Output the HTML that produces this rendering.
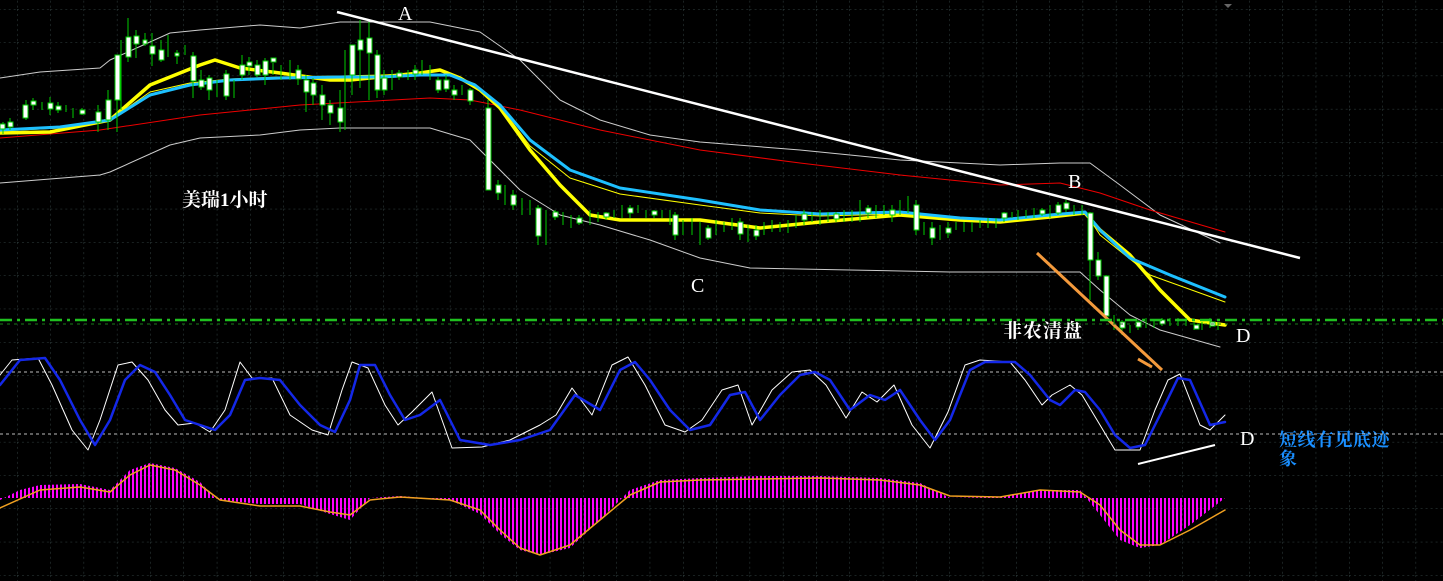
<!DOCTYPE html>
<html><head><meta charset="utf-8"><style>
html,body{margin:0;padding:0;background:#000;width:1443px;height:581px;overflow:hidden}
svg{display:block}
text{font-family:"Liberation Serif","Noto Serif CJK SC",serif}
.cn{font-family:"Liberation Serif","Noto Serif CJK SC",serif;font-weight:bold}
polyline{stroke-linejoin:round;stroke-linecap:round}
</style></head><body>
<svg width="1443" height="581" viewBox="0 0 1443 581" xmlns="http://www.w3.org/2000/svg">
<defs>
<pattern id="grid" width="33.3" height="33.3" patternUnits="userSpaceOnUse" x="17" y="9">
<line x1="0" y1="0" x2="0" y2="33.3" stroke="#354545" stroke-dasharray="2,3"/>
<line x1="0" y1="0" x2="33.3" y2="0" stroke="#354545" stroke-dasharray="2,3"/>
</pattern>
<pattern id="bars" width="4" height="10" patternUnits="userSpaceOnUse">
<rect x="0" y="0" width="2" height="10" fill="#ff00ff"/>
</pattern>
</defs>
<rect width="1443" height="581" fill="#000"/>
<rect width="1443" height="581" fill="url(#grid)"/>
<polygon points="1224,4 1232,4 1228,8" fill="#666"/>

<polyline fill="none" stroke="#ccc" stroke-width="1" points="0,78 40,72 100,68 110,60 170,33 200,30 260,25 300,28 340,22 400,22 430,22 480,32 520,60 560,100 600,120 650,135 700,142 800,150 900,160 1000,165 1060,163 1090,163 1120,185 1160,215 1220,243"/>
<polyline fill="none" stroke="#ccc" stroke-width="1" points="0,183 100,175 110,172 170,145 200,138 260,135 300,130 340,128 380,128 430,128 470,140 520,190 560,215 600,225 650,240 700,258 750,268 850,270 950,272 1000,272 1080,272 1100,290 1130,315 1160,330 1220,347"/>
<polyline fill="none" stroke="#e00" stroke-width="1" points="0,138 100,130 200,115 300,105 430,98 470,100 520,110 600,130 700,150 800,163 900,175 1000,185 1060,183 1100,193 1150,210 1225,232"/>
<polyline fill="none" stroke="#ff0" stroke-width="1" points="0,131 60,128 110,120 150,92 190,83 230,79 280,77 340,76 420,74 450,74 475,84 500,106 530,146 570,178 620,194 700,205 760,213 820,216 900,214 960,219 1000,221 1050,216 1085,212 1100,235 1150,275 1225,302"/>
<polyline fill="none" stroke="#ff0" stroke-width="3.5" points="0,133 50,132 110,120 150,85 200,65 215,60 240,68 280,73 330,80 350,80 380,77 420,73 440,70 460,78 480,90 500,108 530,150 560,185 590,215 620,220 700,220 760,228 820,222 900,215 960,220 1000,222 1050,217 1085,213 1100,230 1130,255 1160,290 1190,320 1225,325"/>
<polyline fill="none" stroke="#1ec0ff" stroke-width="3" points="0,130 60,127 110,120 150,95 190,85 230,80 280,78 340,77 380,77 420,75 450,75 475,85 500,105 530,140 570,170 620,188 700,200 760,210 820,214 900,212 960,218 1000,220 1050,215 1085,212 1100,230 1130,258 1170,275 1225,297"/>

<g stroke="#0c0" stroke-width="1" fill="#fff">
<path d="M3,122V134M10,118V130M26,100V120M33,98V110M42,102V110M50,97V115M58,102V113M66,105V112M73,108V118M82,108V115M98,105V132M108,90V130M117,75V132M121,40V110M128,18V62M136,30V58M145,33V46M152,33V66M161,40V62M168,35V57M177,50V64M185,45V55M193,52V98M201,70V90M209,75V100M217,80V97M226,70V100M234,80V98M242,55V80M249,57V75M257,60V77M265,58V85M273,63V75M281,65V80M290,60V80M298,65V85M306,75V112M313,78V105M322,85V120M330,100V125M340,90V132M345,50V130M352,45V95M360,20V88M369,22V100M377,50V98M384,70V95M392,70V90M399,70V80M408,70V80M415,65V80M422,60V75M430,65V80M438,77V93M446,75V92M454,85V100M462,85V95M470,88V105M488,100V190M498,180V200M505,185V205M513,190V210M522,198V215M530,200V215M538,205V245M546,210V245M555,210V220M563,212V225M571,215V228M579,215V225M590,210V225M598,212V222M606,212V220M614,210V218M622,205V218M630,205V218M638,205V213M646,210V218M654,210V218M662,210V218M670,210V225M675,212V240M683,220V235M692,218V235M700,222V245M708,225V240M716,220V235M724,222V232M732,218V230M740,218V240M748,225V242M756,225V240M764,222V235M772,220V232M780,222V232M788,220V233M796,215V228M804,210V225M812,212V222M820,210V225M828,212V222M836,212V222M844,210V222M852,210V222M860,200V222M868,205V218M876,205V218M884,205V215M892,205V222M900,200V215M908,196V213M916,200V235M924,222V235M932,222V245M940,225V240M948,222V238M956,222V230M964,222V232M972,222V232M980,220V228M988,218V228M996,218V228M1004,212V222M1012,212V218M1018,210V220M1026,210V218M1034,208V218M1042,208V216M1050,205V218M1058,202V215M1066,200V212M1074,205V215M1082,205V215M1090,212V300M1098,252V280M1106,275V320M1114,315V330M1122,320V335M1130,325V333M1138,320V330M1146,318V328M1154,320V328M1162,318V326M1170,318V326M1178,318V326M1186,318V326M1194,322V330M1202,322V330M1210,318V328M1218,322V330"/>
<rect x="0" y="124" width="5" height="5"/><rect x="8" y="122" width="5" height="5"/><rect x="23" y="105" width="5" height="13"/><rect x="31" y="101" width="5" height="4"/><rect x="48" y="103" width="5" height="6"/><rect x="56" y="106" width="5" height="4"/><rect x="80" y="110" width="5" height="4"/><rect x="96" y="112" width="5" height="10"/><rect x="106" y="100" width="5" height="20"/><rect x="115" y="55" width="5" height="45"/><rect x="126" y="37" width="5" height="20"/><rect x="134" y="36" width="5" height="8"/><rect x="143" y="40" width="4" height="4"/><rect x="150" y="46" width="5" height="8"/><rect x="159" y="50" width="5" height="10"/><rect x="175" y="53" width="4" height="3"/><rect x="191" y="56" width="5" height="25"/><rect x="199" y="80" width="5" height="7"/><rect x="207" y="78" width="5" height="12"/><rect x="224" y="74" width="5" height="22"/><rect x="240" y="65" width="5" height="10"/><rect x="247" y="62" width="5" height="4"/><rect x="255" y="65" width="5" height="10"/><rect x="263" y="61" width="5" height="14"/><rect x="271" y="58" width="5" height="4"/><rect x="296" y="70" width="5" height="9"/><rect x="304" y="80" width="5" height="12"/><rect x="311" y="83" width="5" height="12"/><rect x="320" y="95" width="5" height="10"/><rect x="328" y="105" width="5" height="8"/><rect x="338" y="108" width="5" height="14"/><rect x="350" y="45" width="5" height="30"/><rect x="358" y="40" width="5" height="10"/><rect x="367" y="38" width="5" height="15"/><rect x="375" y="55" width="5" height="35"/><rect x="382" y="78" width="5" height="12"/><rect x="397" y="73" width="5" height="4"/><rect x="413" y="70" width="5" height="4"/><rect x="436" y="80" width="5" height="10"/><rect x="444" y="80" width="5" height="9"/><rect x="452" y="90" width="5" height="5"/><rect x="468" y="90" width="5" height="11"/><rect x="486" y="108" width="5" height="82"/><rect x="496" y="185" width="5" height="8"/><rect x="511" y="195" width="5" height="10"/><rect x="536" y="208" width="5" height="28"/><rect x="553" y="212" width="5" height="5"/><rect x="577" y="218" width="5" height="5"/><rect x="604" y="213" width="5" height="4"/><rect x="628" y="208" width="5" height="5"/><rect x="652" y="211" width="5" height="4"/><rect x="673" y="215" width="5" height="20"/><rect x="706" y="228" width="5" height="10"/><rect x="738" y="222" width="5" height="12"/><rect x="754" y="230" width="5" height="6"/><rect x="802" y="214" width="5" height="6"/><rect x="834" y="214" width="5" height="5"/><rect x="866" y="208" width="5" height="5"/><rect x="890" y="210" width="5" height="5"/><rect x="914" y="205" width="5" height="25"/><rect x="930" y="228" width="5" height="10"/><rect x="946" y="228" width="5" height="5"/><rect x="1002" y="213" width="5" height="5"/><rect x="1040" y="210" width="5" height="4"/><rect x="1056" y="205" width="5" height="8"/><rect x="1064" y="203" width="5" height="6"/><rect x="1088" y="213" width="5" height="47"/><rect x="1096" y="260" width="5" height="16"/><rect x="1104" y="276" width="5" height="40"/><rect x="1120" y="322" width="5" height="6"/><rect x="1136" y="322" width="5" height="5"/><rect x="1160" y="320" width="5" height="4"/><rect x="1194" y="325" width="5" height="4"/><rect x="1210" y="322" width="5" height="4"/>
</g>

<line x1="337" y1="12" x2="1300" y2="258" stroke="#fff" stroke-width="2.5"/>
<line x1="1037" y1="253" x2="1162" y2="370" stroke="#f49a3c" stroke-width="3"/>
<line x1="1138" y1="359" x2="1152" y2="367" stroke="#f49a3c" stroke-width="3"/>
<line x1="0" y1="320" x2="1443" y2="320" stroke="#1fc01f" stroke-width="2.5" stroke-dasharray="12,5,3,5"/>
<line x1="0" y1="324" x2="1443" y2="324" stroke="#1a7a1a" stroke-width="1" stroke-dasharray="3,4"/>

<text x="398" y="20" fill="#fff" font-size="20">A</text>
<text x="1068" y="188" fill="#fff" font-size="20">B</text>
<text x="691" y="292" fill="#fff" font-size="20">C</text>
<text x="1236" y="342" fill="#fff" font-size="20">D</text>
<text x="1240" y="445" fill="#fff" font-size="20">D</text>
<text x="182" y="206" fill="#fff" font-size="19" class="cn">美瑞1小时</text>
<text x="1003" y="337" fill="#fff" font-size="19" class="cn" letter-spacing="1">非农清盘</text>
<text x="1279" y="446" fill="#1a8fff" font-size="18" class="cn" letter-spacing="0.5">短线有见底迹</text>
<text x="1279" y="465" fill="#1a8fff" font-size="18" class="cn">象</text>

<line x1="0" y1="372" x2="1443" y2="372" stroke="#bbb" stroke-dasharray="3,3"/>
<line x1="0" y1="434" x2="1443" y2="434" stroke="#bbb" stroke-dasharray="3,3"/>
<polyline fill="none" stroke="#fff" stroke-width="1" points="0,375 12,360 38,358 52,385 72,430 88,450 100,420 118,365 132,362 148,380 165,410 178,425 195,423 210,432 225,410 240,362 252,378 272,378 290,415 312,430 328,435 342,390 352,362 368,368 385,405 398,425 412,412 432,392 452,448 482,447 510,440 540,425 556,415 572,388 592,415 612,365 628,357 645,385 665,425 685,432 702,420 722,390 738,385 752,425 772,390 792,372 810,370 826,385 846,418 862,392 877,402 894,385 912,425 930,448 948,412 965,365 980,360 1010,362 1025,380 1042,405 1052,395 1070,385 1082,395 1100,425 1115,450 1140,450 1155,410 1168,380 1180,374 1200,425 1210,430 1225,415"/>
<polyline fill="none" stroke="#1428e8" stroke-width="2.5" points="0,385 20,360 45,358 60,380 80,420 95,445 110,420 125,380 140,365 155,372 170,395 185,420 200,425 215,430 230,415 245,380 260,378 280,380 300,405 320,425 335,432 350,400 360,365 375,365 390,395 405,420 420,415 440,400 460,440 490,445 520,440 550,430 575,395 600,410 620,370 635,362 650,380 670,410 690,430 710,425 730,395 745,392 760,420 780,395 800,375 815,372 830,380 850,410 870,395 885,400 900,390 920,420 935,440 950,420 970,370 985,362 1015,362 1030,375 1050,400 1060,405 1075,390 1085,392 1100,410 1115,435 1130,448 1145,445 1160,415 1178,378 1190,380 1210,425 1225,422"/>
<line x1="1138" y1="464" x2="1215" y2="445" stroke="#fff" stroke-width="2"/>

<polygon fill="url(#bars)" points="0,498 0,500 20,490 40,485 80,484 110,490 130,470 150,463 175,468 200,482 215,498 220,500 260,504 300,504 330,514 350,520 370,498 400,496 450,500 480,514 500,534 520,550 540,555 570,548 600,520 630,490 660,480 700,478 760,476 820,476 880,478 920,483 950,498 1000,497 1040,490 1080,490 1100,515 1120,540 1140,548 1160,545 1190,525 1225,498"/>
<polyline fill="none" stroke="#f0a020" stroke-width="1.5" points="0,508 40,490 80,487 110,492 130,475 150,465 175,470 200,485 220,500 260,506 300,506 330,512 350,515 370,500 400,497 450,500 480,510 500,530 520,548 540,555 570,545 600,520 630,495 660,482 700,480 760,479 820,478 880,480 920,485 950,496 1000,497 1040,490 1080,492 1100,505 1120,530 1140,545 1160,545 1190,530 1225,510"/>
</svg>
</body></html>
